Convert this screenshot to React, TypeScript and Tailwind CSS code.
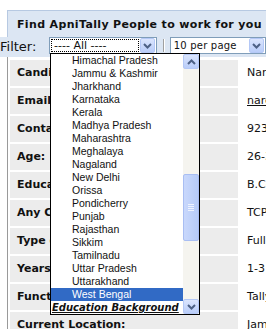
import React from 'react';

const STATES = [
  'Himachal Pradesh',
  'Jammu & Kashmir',
  'Jharkhand',
  'Karnataka',
  'Kerala',
  'Madhya Pradesh',
  'Maharashtra',
  'Meghalaya',
  'Nagaland',
  'New Delhi',
  'Orissa',
  'Pondicherry',
  'Punjab',
  'Rajasthan',
  'Sikkim',
  'Tamilnadu',
  'Uttar Pradesh',
  'Uttarakhand',
  'West Bengal',
];

const ROWS: [string, string, boolean?][] = [
  ['Candidate Name:', 'Narender Kumar'],
  ['Email:', 'narender@apnitally.com', true],
  ['Contact No:', '9234567890'],
  ['Age:', '26-30 Years'],
  ['Education:', 'B.Com'],
  ['Any Certification:', 'TCP'],
  ['Type of Job:', 'Full Time'],
  ['Years of Experience:', '1-3 Years'],
  ['Functional Area:', 'Tally Accounting'],
  ['Current Location:', 'Jammu'],
];

// XP style little arrow button
function ArrowBtn({ up = false, className = '' }: { up?: boolean; className?: string }) {
  return (
    <div
      className={`flex items-center justify-center rounded-[2px] border border-[#b4c8f6] bg-gradient-to-b from-[#dbe5fd] to-[#b9cdf9] ${className}`}
    >
      <svg width="9" height="6" viewBox="0 0 9 6" className={up ? 'rotate-180' : ''}>
        <path d="M1 1 L4.5 4.5 L8 1" fill="none" stroke="#4d6185" strokeWidth="2" />
      </svg>
    </div>
  );
}

export default function App() {
  return (
    <div className="relative h-[329px] w-[266px] overflow-hidden bg-white font-['DejaVu_Sans',sans-serif] text-[#111]">
      <div className="h-[10px]" />

      {/* title bar */}
      <div className="ml-[7px] h-[27px] whitespace-nowrap border-l border-t border-[#b7c9e2] bg-[#dce6f3] pl-[9px] pt-[7px] text-[11px] font-bold leading-[13px] tracking-[0.35px]">
        Find ApniTally People to work for you
      </div>

      {/* filter row */}
      <div className="flex h-[20px] items-start whitespace-nowrap bg-[#dce6f3]">
        <span className="mt-[2px] w-[51px] text-[13px] leading-[16px]">Filter:</span>
        <div className="flex h-[17px] w-[112px] items-center border border-[#7f9db9] bg-white">
          <div className="ml-[1px] flex h-[13px] flex-1 items-center border border-dotted border-black pl-[2px] text-[11px] leading-[13px]">
            ---- All ----
          </div>
          <ArrowBtn className="ml-[1px] mr-[1px] h-[15px] w-[15px]" />
        </div>
        <div className="ml-[6px] mt-[2px] h-[13px] w-[2px] border-l border-r border-l-[#a0a0a0] border-r-white" />
        <div className="ml-[5px] flex h-[17px] w-[100px] items-center border border-[#7f9db9] bg-white">
          <div className="flex-1 pl-[3px] text-[10px] leading-[13px] tracking-[0.2px]">10 per page</div>
          <ArrowBtn className="mr-[1px] h-[15px] w-[15px]" />
        </div>
      </div>

      {/* detail table */}
      <div className="ml-[7px] flex flex-col gap-[2px] border-l border-[#9a9a9a] pl-[2px] pt-[3px]">
        {ROWS.map(([label, value, link]) => (
          <div key={label} className="flex h-[26px] gap-[2px] whitespace-nowrap">
            <div className="flex w-[228px] shrink-0 items-center bg-[#ececec] pl-[7px] text-[11px] font-bold">
              {label}
            </div>
            <div className={`flex items-center pl-[7px] text-[11px] ${link ? 'underline' : ''}`}>{value}</div>
          </div>
        ))}
      </div>

      {/* open dropdown list */}
      <div className="absolute left-[50px] top-[53px] flex h-[262px] w-[150px] border border-black bg-white">
        <div className="w-[132px] font-['Liberation_Sans',sans-serif] text-[10.5px] leading-[13px]">
          {STATES.map((s) => (
            <div
              key={s}
              className={`h-[13px] whitespace-nowrap pl-[21px] ${s === 'West Bengal' ? 'bg-[#316ac5] text-white' : ''}`}
            >
              {s}
            </div>
          ))}
          <div className="h-[13px] whitespace-nowrap pl-[1px] font-['DejaVu_Sans',sans-serif] text-[10px] font-bold italic underline">
            Education Background
          </div>
        </div>
        {/* scrollbar */}
        <div className="flex w-[16px] flex-col bg-[#f5f4ef]">
          <ArrowBtn up className="h-[15px] w-[16px]" />
          <div className="relative flex-1">
            <div className="absolute left-0 top-[105px] flex h-[67px] w-[16px] flex-col items-center justify-center gap-[1px] rounded-[2px] border border-[#a9bef3] bg-gradient-to-r from-[#c9d8fc] to-[#b6cbf8]">
              {[0, 1, 2, 3].map((i) => (
                <div key={i} className="h-[1px] w-[6px] bg-[#eef3fe]" />
              ))}
            </div>
          </div>
          <ArrowBtn className="h-[15px] w-[16px]" />
        </div>
      </div>
    </div>
  );
}
